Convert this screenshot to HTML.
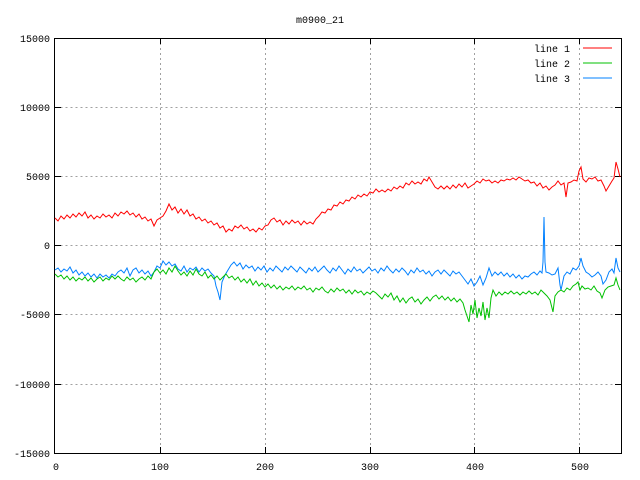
<!DOCTYPE html>
<html><head><meta charset="utf-8"><style>
html,body{margin:0;padding:0;background:#fff;}
svg{display:block;}
text{font-family:"Liberation Mono",monospace;font-size:10px;fill:#000;}
</style></head><body>
<svg width="640" height="480" viewBox="0 0 640 480">
<rect width="640" height="480" fill="#fff"/>
<g stroke="#a0a0a0" stroke-width="1" stroke-dasharray="2,3" fill="none">
<path d="M55.5 107.5H621M55.5 176.5H621M55.5 245.5H621M55.5 314.5H621M55.5 384.5H621"/>
<path d="M160.5 38V453M265.5 38V453M370.5 38V453M474.5 38V453M579.5 38V453"/>
</g>
<g stroke="#000" stroke-width="1" fill="none">
<rect x="54.5" y="38.5" width="567" height="415"/>
<path d="M55 107.5h6M55 176.5h6M55 245.5h6M55 314.5h6M55 384.5h6M621 107.5h-6M621 176.5h-6M621 245.5h-6M621 314.5h-6M621 384.5h-6"/>
<path d="M160.5 453v-6M265.5 453v-6M370.5 453v-6M474.5 453v-6M579.5 453v-6M160.5 38v6M265.5 38v6M370.5 38v6M474.5 38v6M579.5 38v6"/>
</g>
<text x="320" y="23" text-anchor="middle">m0900_21</text>
<g text-anchor="end">
<text x="50" y="42">15000</text><text x="50" y="111">10000</text><text x="50" y="180">5000</text>
<text x="50" y="249">0</text><text x="50" y="318">-5000</text><text x="50" y="388">-10000</text><text x="50" y="457">-15000</text>
</g>
<g text-anchor="middle">
<text x="56" y="470">0</text><text x="160" y="470">100</text><text x="265" y="470">200</text>
<text x="370" y="470">300</text><text x="475" y="470">400</text><text x="580" y="470">500</text>
</g>
<text x="570" y="52" text-anchor="end">line 1</text>
<text x="570" y="67" text-anchor="end">line 2</text>
<text x="570" y="82" text-anchor="end">line 3</text>
<path d="M583 48h29" stroke="#ff0000"/>
<path d="M583 63h29" stroke="#00c000"/>
<path d="M583 78h29" stroke="#0080ff"/>
<g fill="none" stroke-width="1">
<polyline stroke="#ff0000" points="55,218 58,221 61,216 64,219 67,215 70,218 73,214 76,217 79,213 82,216 85,212 88,218 91,215 94,219 97,216 100,218 103,214 106,217 109,215 112,218 115,213 118,216 121,212 124,214 127,211 130,215 133,213 136,217 139,214 142,219 145,217 148,221 151,219 154,226 157,220 160,218 163,216 166,211 169,204 172,210 175,207 178,213 181,209 184,214 187,210 190,216 193,214 196,219 199,217 202,221 205,219 208,223 211,221 214,225 217,223 220,228 223,226 226,232 229,229 232,231 235,226 238,228 241,225 244,229 247,227 250,231 253,229 256,232 259,228 262,230 265,226 268,225 271,220 274,218 277,222 280,220 283,225 286,221 289,224 292,220 295,223 298,221 301,225 304,221 307,224 310,222 313,224 316,219 319,216 322,212 325,213 328,209 331,210 334,205 337,206 340,202 343,204 346,200 349,201 352,197 355,199 358,195 361,197 364,194 367,196 370,192 373,193 376,189 379,192 382,190 385,192 388,189 391,191 394,187 397,189 400,186 403,188 406,183 409,185 412,181 415,184 418,182 421,184 424,179 427,181 429,177 432,182 435,187 438,189 441,186 444,189 447,186 450,189 453,185 456,188 459,184 462,187 465,183 468,188 471,186 474,184 477,181 480,183 483,179 486,181 489,180 492,183 495,181 498,183 501,180 504,181 507,179 510,180 513,178 516,180 519,177 522,179 525,181 528,180 531,183 534,182 537,186 540,183 543,188 546,186 549,190 552,187 555,185 558,181 561,185 564,183 566,197 568,183 571,182 574,180 577,181 579,171 581,167 583,179 586,182 589,178 592,179 595,177 598,181 601,180 604,186 606,191 609,186 612,181 614,178 616,162 618,169 620,177"/>
<polyline stroke="#0080ff" points="55,270 58,268 61,272 64,269 67,271 70,267 73,273 76,270 79,275 82,272 85,276 88,273 91,277 94,274 97,278 100,274 103,277 106,275 109,278 112,274 115,276 118,272 121,270 124,273 127,268 130,276 133,270 136,268 139,273 142,270 145,274 148,271 151,276 154,272 157,266 160,268 163,261 166,265 169,262 172,266 175,264 178,269 181,271 184,266 187,272 190,268 193,270 196,267 199,272 202,268 205,271 208,269 211,273 214,276 216,286 218,292 220,300 222,282 225,275 228,270 231,265 234,262 237,266 240,263 243,269 246,265 249,268 252,266 255,271 258,267 261,270 264,266 267,272 270,268 273,271 276,266 279,269 282,272 285,267 288,270 291,266 294,269 297,272 300,267 303,270 306,273 309,268 312,271 315,267 318,272 321,269 324,266 327,270 330,273 333,268 336,271 339,266 342,270 345,274 348,269 351,272 354,267 357,271 360,269 363,273 366,270 369,267 372,271 375,269 378,273 381,268 384,271 387,266 390,270 393,273 396,269 399,272 402,268 405,271 408,275 411,270 414,273 417,268 420,272 423,270 426,274 429,271 432,276 435,272 438,270 441,274 444,270 447,273 450,276 453,271 456,274 459,272 462,276 465,280 468,284 471,279 474,286 477,282 480,276 483,285 486,278 489,268 492,276 495,272 498,275 501,272 504,276 507,273 510,277 513,274 516,278 519,275 522,279 525,276 528,277 531,274 534,272 537,275 540,271 542,273 543,262 544,217 545,262 546,272 549,273 552,275 555,274 558,268 560,285 561,290 564,276 567,272 570,274 573,268 576,270 579,266 581,258 583,266 586,272 589,274 592,277 595,275 598,272 601,276 603,284 606,280 609,272 612,269 614,273 616,258 618,268 620,272"/>
<polyline stroke="#00c000" points="55,274 58,277 61,275 64,279 67,276 70,280 73,277 76,281 79,278 82,280 85,277 88,281 91,278 94,282 97,279 100,277 103,281 106,278 109,280 112,276 115,279 118,276 121,279 124,281 127,277 130,280 133,278 136,282 139,279 142,277 145,280 148,276 151,279 154,272 157,269 160,273 163,270 166,274 169,268 172,272 175,266 178,271 181,275 184,272 187,276 190,271 193,275 196,269 199,274 202,276 205,272 208,278 211,275 214,279 217,276 220,280 223,277 226,274 229,278 232,276 235,280 238,277 241,282 244,279 247,283 250,279 253,285 256,281 259,286 262,283 265,287 268,284 271,288 274,285 277,289 280,286 283,290 286,287 289,289 292,286 295,290 298,287 301,289 304,286 307,290 310,288 313,292 316,288 319,290 322,287 325,291 328,293 331,289 334,292 337,288 340,291 343,289 346,293 349,290 352,294 355,290 358,293 361,291 364,295 367,292 370,294 373,291 376,293 379,296 382,299 385,294 388,297 391,293 394,300 397,296 400,302 403,298 406,303 409,299 412,297 415,302 418,299 421,304 424,300 427,297 430,301 433,297 436,295 439,299 442,296 445,300 448,297 451,301 454,298 457,302 460,299 463,303 465,310 467,316 469,322 471,305 473,314 475,300 477,318 479,308 481,316 483,302 485,320 487,308 489,318 491,298 493,290 496,296 499,292 502,295 505,292 508,294 511,291 514,294 517,292 520,295 523,292 526,294 529,291 532,294 535,292 538,295 541,290 544,293 547,296 550,300 552,308 553,312 555,296 558,292 561,290 564,292 567,288 570,290 573,286 576,284 578,282 580,290 582,286 585,289 588,288 591,290 594,286 597,291 600,293 602,298 605,290 608,287 611,286 614,285 616,278 618,285 620,290"/>
</g>
</svg>
</body></html>
